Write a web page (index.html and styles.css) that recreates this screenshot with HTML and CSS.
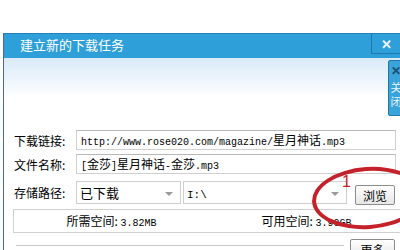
FILE: index.html
```html
<!DOCTYPE html>
<html>

<head>
    <meta charset="utf-8">
    <title>建立新的下载任务</title>
    <link rel="stylesheet" href="styles.css">
</head>

<body>
    <div class="top"></div>
    <div class="dialog">
        <div class="titlebar">
            <span class="title">建立新的下载任务</span>
            <span class="close">✕</span>
        </div>
        <div class="content">
            <div class="row row1">
                <label>下载链接:</label>
                <div class="field mono">http://www.rose020.com/magazine/<span class="cjk">星月神话</span>.mp3</div>
            </div>
            <div class="row row2">
                <label>文件名称:</label>
                <div class="field mono">[<span class="cjk">金莎</span>]<span class="cjk">星月神话</span>-<span class="cjk">金莎</span>.mp3</div>
            </div>
            <div class="row row3">
                <label>存储路径:</label>
                <div class="select sel1"><span>已下载</span><i class="arrow"></i></div>
                <div class="select sel2"><span class="mono">I:\</span><i class="arrow"></i></div>
                <button class="btn browse">浏览</button>
            </div>
            <div class="space">
                <div class="cell">所需空间: <span class="mono">3.82MB</span></div>
                <div class="cell">可用空间: <span class="mono">3.90GB</span></div>
            </div>
            <div class="bottom">
                <div class="rule"></div>
                <button class="btn more">更多</button>
            </div>
        </div>
    </div>

    <div class="sidetab">
        <span class="x">✕</span>
        <span>关</span>
        <span>闭</span>
    </div>

    <!-- red pen mark drawn over the screenshot -->
    <div class="ring"></div>
    <span class="num">1</span>
</body>

</html>
```

FILE: styles.css
```css
html, body {
    margin: 0;
    padding: 0;
}

body {
    width: 400px;
    height: 250px;
    overflow: hidden;
    position: relative;
    background: #ffffff;
    font-family: "Noto Sans CJK SC", "Liberation Sans", sans-serif;
    font-size: 12px;
    color: #000;
}

.top {
    height: 33px;
}

.dialog {
    margin-left: 3px;
    width: 397px;
    border-left: 1px solid #4a6a88;
}

.titlebar {
    height: 24px;
    background: #2e9fd8;
    border-top: 1px solid #2480b8;
    display: flex;
    justify-content: space-between;
    align-items: flex-start;
}

.title {
    color: #fff;
    font-size: 13px;
    line-height: 22px;
    padding-left: 16px;
}

.close {
    width: 28px;
    height: 19px;
    border: 1px solid #1f78ad;
    border-top: none;
    color: #f2f8fc;
    font-size: 13px;
    font-weight: bold;
    text-align: center;
    line-height: 19px;
}

.content {
    background: linear-gradient(#d9eaf8, #ffffff 40px);
    padding: 72px 0 0 10px;
    height: 200px;
}

.row {
    display: flex;
    align-items: center;
}

.row > * {
    flex: none;
    box-sizing: border-box;
}

.row label {
    width: 62px;
    font-size: 12px;
}

.row1 {
    height: 20px;
}

.row2 {
    height: 20px;
    margin-top: 4px;
}

.row3 {
    height: 23px;
    margin-top: 7px;
}

.mono {
    font-family: "Liberation Mono", monospace;
    font-size: 10px;
}

.cjk {
    font-family: "Noto Sans CJK SC", sans-serif;
    font-size: 12px;
}

.row .field {
    width: 320px;
    height: 20px;
    border: 1px solid #d0d0d0;
    border-top-color: #b8b8b8;
    background: #fff;
    line-height: 18px;
    padding-left: 4px;
    white-space: nowrap;
    overflow: hidden;
}

.select {
    border: 1px solid #cfcfcf;
    background: #fff;
    position: relative;
    line-height: 22px;
    padding-left: 3px;
    height: 23px;
}

.select span {
    font-size: 13px;
}

.select .mono {
    font-size: 11px;
}

.row .sel1 {
    width: 105px;
}

.row .sel2 {
    width: 164px;
    margin-left: 2px;
}

.arrow {
    position: absolute;
    right: 7px;
    top: 10px;
    border-left: 4px solid transparent;
    border-right: 4px solid transparent;
    border-top: 4px solid #9a9a9a;
}

.btn {
    font-family: "Noto Sans CJK SC", sans-serif;
    font-size: 12px;
    height: 20px;
    padding: 0;
    border: 1px solid #8c8c8c;
    border-radius: 2px;
    background: linear-gradient(#ffffff, #e6e6e6);
    color: #000;
}

.row .browse {
    width: 40px;
    margin-left: 8px;
    margin-top: 5px;
}

.space {
    margin-top: 5px;
    width: 390px;
    height: 22px;
    border: 1px solid #d0d0d0;
    display: flex;
    margin-left: -1px;
}

.cell {
    flex: 1;
    text-align: center;
    line-height: 22px;
}

.bottom {
    display: flex;
    align-items: flex-start;
    margin-top: 6px;
}

.rule {
    width: 328px;
    margin-top: 6px;
    margin-left: 2px;
    border-top: 1px solid #c8c8c8;
}

.more {
    width: 45px;
    margin-left: 6px;
}

.sidetab {
    position: absolute;
    left: 388px;
    top: 60px;
    width: 14px;
    height: 54px;
    background: #3aa3da;
    border: 1px solid #1f78ad;
    border-radius: 2px 0 0 2px;
    display: flex;
    flex-direction: column;
    align-items: center;
    color: #eaf4fb;
    font-size: 11px;
    line-height: 14px;
}

.sidetab .x {
    font-weight: bold;
    color: #1b4e73;
    font-size: 12px;
    padding: 2px 0 3px;
}

.ring {
    position: absolute;
    left: 312px;
    top: 167px;
    width: 104px;
    height: 54px;
    border: 4px solid #c4212a;
    border-radius: 50%;
    transform: rotate(-4deg);
}

.num {
    position: absolute;
    left: 342px;
    top: 174px;
    color: #c4212a;
    font-family: "Liberation Sans", sans-serif;
    font-size: 16px;
    line-height: 16px;
}
```
